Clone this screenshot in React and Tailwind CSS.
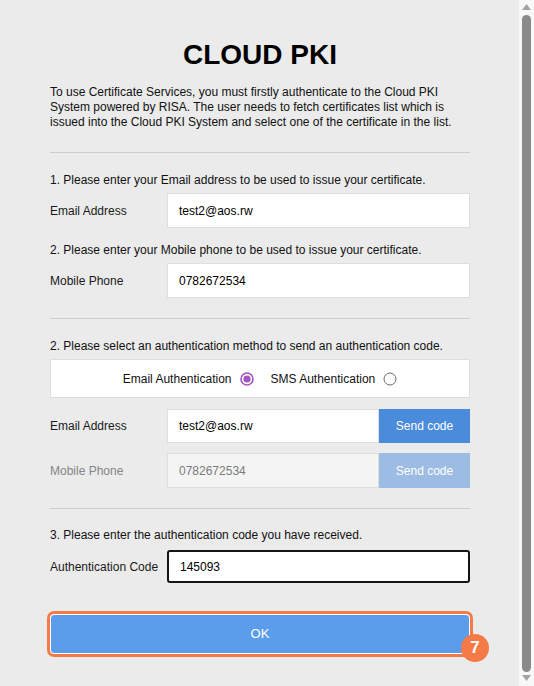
const font = { fontFamily: '"Liberation Sans", Arial, sans-serif' };

const Radio = ({ checked }) => (
  <svg width="14" height="14" viewBox="0 0 14 14" className="shrink-0">
    {checked ? (
      <>
        <circle cx="7" cy="7" r="6" fill="#fff" stroke="#a452c4" strokeWidth="1.6" />
        <circle cx="7" cy="7" r="3.6" fill="#a452c4" />
      </>
    ) : (
      <circle cx="7" cy="7" r="6" fill="#fff" stroke="#6b6b6b" strokeWidth="1" />
    )}
  </svg>
);

const Field = ({ label, value, disabled, button, focused, className = "" }) => (
  <div className={`flex items-center ${className}`}>
    <div className={`w-[117px] text-[12px] ${disabled ? "text-[#858585]" : "text-[#1a1a1a]"}`}>
      {label}
    </div>
    <div className="flex flex-1 h-full">
      <div
        className={`flex-1 flex items-center pl-[11px] text-[12px] ${
          focused
            ? "border-2 border-[#141414] rounded-[3px] bg-white text-black pl-[10px]"
            : disabled
            ? "border border-[#dedede] bg-[#f4f4f4] text-[#7b7b7b]"
            : "border border-[#dedede] bg-white text-black"
        }`}
      >
        {value}
      </div>
      {button && (
        <div
          className={`w-[91px] flex items-center justify-center text-[12px] text-white ${
            disabled ? "bg-[#9cbce3]" : "bg-[#4a8bdb]"
          }`}
        >
          Send code
        </div>
      )}
    </div>
  </div>
);

const Divider = ({ className = "" }) => <div className={`h-px bg-[#cdcdcd] ${className}`} />;

export default function App() {
  return (
    <div className="flex h-[686px] w-[534px] overflow-hidden bg-[#ebebeb]" style={font}>
      <div className="flex-1">
        <div className="ml-[50px] w-[420px] pt-[39px]">
          <h1 className="text-center text-[28px] leading-[32px] font-bold text-black">CLOUD PKI</h1>
          <p className="mt-[14px] text-[12px] leading-[15px] text-[#111]">
            To use Certificate Services, you must firstly authenticate to the Cloud PKI System powered by RISA. The
            user needs to fetch certificates list which is issued into the Cloud PKI System and select one of the
            certificate in the list.
          </p>

          <Divider className="mt-[22px]" />

          <p className="mt-[19px] text-[12px] leading-[16px] text-[#111]">
            1. Please enter your Email address to be used to issue your certificate.
          </p>
          <Field className="mt-[5px] h-[35px]" label="Email Address" value="test2@aos.rw" />

          <p className="mt-[14px] text-[12px] leading-[16px] text-[#111]">
            2. Please enter your Mobile phone to be used to issue your certificate.
          </p>
          <Field className="mt-[5px] h-[35px]" label="Mobile Phone" value="0782672534" />

          <Divider className="mt-[20px]" />

          <p className="mt-[19px] text-[12px] leading-[16px] text-[#111]">
            2. Please select an authentication method to send an authentication code.
          </p>
          <div className="mt-[5px] h-[39px] border border-[#dedede] bg-white flex items-center justify-center text-[12px] text-[#111]">
            <span>Email Authentication</span>
            <span className="ml-[8px]">
              <Radio checked />
            </span>
            <span className="ml-[17px]">SMS Authentication</span>
            <span className="ml-[8px]">
              <Radio />
            </span>
          </div>

          <Field className="mt-[11px] h-[34px]" label="Email Address" value="test2@aos.rw" button />
          <Field className="mt-[10px] h-[35px]" label="Mobile Phone" value="0782672534" button disabled />

          <Divider className="mt-[20px]" />

          <p className="mt-[18px] text-[12px] leading-[16px] text-[#111]">
            3. Please enter the authentication code you have received.
          </p>
          <Field className="mt-[7px] h-[33px]" label="Authentication Code" value="145093" focused />

          <div className="relative mt-[28px] -mx-[3px] rounded-[7px] border-[3px] border-[#f47a48]">
            <div className="h-[40px] rounded-[4px] border border-white bg-[#5c9deb] flex items-center justify-center text-[13px] text-white">
              OK
            </div>
            <div className="absolute -right-[19px] -bottom-[8px] w-[28px] h-[28px] rounded-full bg-[#f47a48] flex items-center justify-center text-white text-[17px] font-bold">
              7
            </div>
          </div>
        </div>
      </div>

      {/* scrollbar */}
      <div className="w-[15px] h-full bg-[#f8f8f8] flex flex-col items-center">
        <svg width="9" height="6" viewBox="0 0 9 6" className="mt-[4px]">
          <polygon points="4.5,0 9,6 0,6" fill="#a3a3a3" />
        </svg>
        <div className="mt-[5px] w-[9px] flex-1 rounded-full bg-[#8a8a8a]" />
        <svg width="9" height="6" viewBox="0 0 9 6" className="mt-[3px] mb-[5px]">
          <polygon points="0,0 9,0 4.5,6" fill="#a3a3a3" />
        </svg>
      </div>
    </div>
  );
}
